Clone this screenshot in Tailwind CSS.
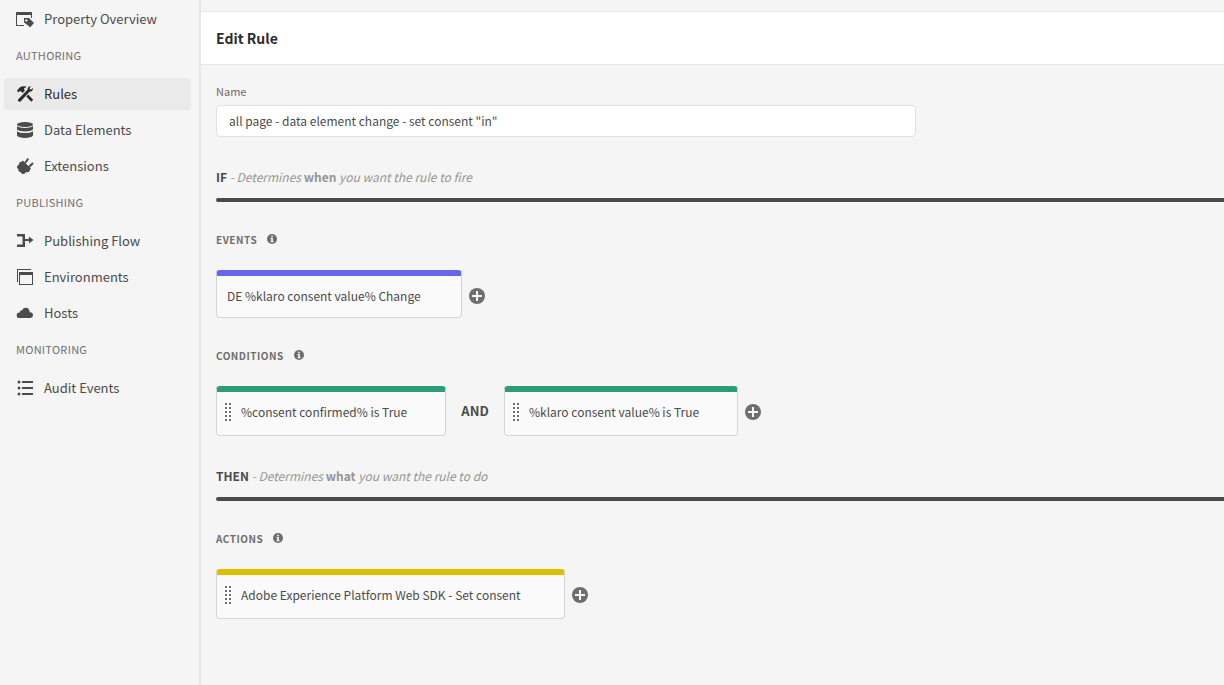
<!DOCTYPE html>
<html lang="en">
<head>
<meta charset="utf-8">
<meta name="viewport" content="width=device-width, initial-scale=1">
<title>Edit Rule</title>
<script src="https://cdn.jsdelivr.net/npm/@tailwindcss/browser@4"></script>
</head>
<body class="flex min-h-screen overflow-x-hidden bg-[#f5f5f5] font-['Noto_Sans_CJK_SC',sans-serif] text-[13px] leading-5 text-[#4b4b4b]">
<svg class="hidden" aria-hidden="true">
  <symbol id="info" viewBox="0 0 10 10"><circle cx="5" cy="5" r="5" fill="#6e6e6e"/><path d="M4.2 1.7h1.7v1.5H4.2zM3.5 4.1h2.4v3.1h.7v1H3.5v-1h.7V5.1h-.7z" fill="#f5f5f5"/></symbol>
  <symbol id="plus" viewBox="0 0 16 16"><circle cx="8" cy="8" r="8" fill="#6e6e6e"/><path d="M7 3h2v4h4v2H9v4H7V9H3V7h4z" fill="#f5f5f5"/></symbol>
  <symbol id="grip" viewBox="0 0 6 18"><path d="M0 0h2v2H0zM4 0h2v2H4zM0 4h2v2H0zM4 4h2v2H4zM0 8h2v2H0zM4 8h2v2H4zM0 12h2v2H0zM4 12h2v2H4zM0 16h2v2H0zM4 16h2v2H4z" fill="#6e6e6e"/></symbol>
</svg>

<nav class="w-[201px] shrink-0 border-r-2 border-[#e8e8e8] pt-[3px] pr-2 pl-1">
  <a href="#" class="flex h-8 items-center gap-2.5 rounded px-3">
    <svg class="h-[18px] w-[18px]" viewBox="0 0 18 18" fill="currentColor"><path d="M0 2h16v6h-1V5H1v10h7v1H0z"/><path d="M8 8h5l5 5-4 4.500-1.200-1.500L8 12.500zM10.300 9.200a1.200 1.200 0 1 0 .01 0z" fill-rule="evenodd"/></svg>
    Property Overview</a>
  <h2 class="mt-2.5 mb-[13px] px-3 text-[11px] tracking-wide text-[#6e6e6e]">AUTHORING</h2>
  <ul class="flex flex-col gap-1">
    <li><a href="#" aria-current="page" class="flex h-8 items-center gap-2.5 rounded bg-[#eaeaea] px-3 text-[#2c2c2c]">
      <svg class="h-[18px] w-[18px]" viewBox="0 0 18 18" fill="currentColor"><path d="M1 5.600L4 2.200C5.800 1 8 1 10.500 1.500L9.800 2.400C8.400 2.700 7.800 3.500 8.200 4.700L9 5.600 6.700 7.900 5 6.200 3.400 6.300 2.300 7.600z"/><path d="M12.200 9.600L17.200 14.800 15.200 16.800 10.300 11.600z"/><path d="M2.300 14.300L11.500 4.800C11.300 2.800 12.800 1 15 1.200L13.600 3 14 4.300 15.200 4.500 16.900 3C17.300 5.200 15.500 7 13.500 6.800L4.800 16.300C3.400 17.700 1 15.800 2.300 14.300z"/></svg>
      Rules</a></li>
    <li><a href="#" class="flex h-8 items-center gap-2.5 rounded px-3">
      <svg class="h-[18px] w-[18px]" viewBox="0 0 18 18" fill="currentColor"><ellipse cx="9" cy="3.500" rx="8" ry="2.500"/><path d="M1 5c2 2.600 14 2.600 16 0v3.200c-1.500 3-14.500 3-16 0zM1 10c2 2.600 14 2.600 16 0v4.500c-1.500 3.300-14.500 3.300-16 0z"/><path d="M1 9.600c2 2.400 14 2.400 16 0" fill="none" stroke="#f5f5f5"/></svg>
      Data Elements</a></li>
    <li><a href="#" class="flex h-8 items-center gap-2.5 rounded px-3">
      <svg class="h-[18px] w-[18px]" viewBox="0 0 18 18" fill="currentColor"><path d="M6.800 3.500L15 11.500 14 12.500Q14 14.500 12.500 15L10 15.300 8.300 16.700Q7 17.500 5.800 16.500L4.500 15.200 2.700 14.300 2.300 12.300 1.300 11Q.6 10 1.300 9L3.200 7 3.500 5.200 5.500 4.700z"/><path d="M9 6l3.300-4.300M13 10l4-4" fill="none" stroke="currentColor" stroke-width="2"/></svg>
      Extensions</a></li>
  </ul>
  <h2 class="mt-2.5 mb-[13px] px-3 text-[11px] tracking-wide text-[#6e6e6e]">PUBLISHING</h2>
  <ul class="flex flex-col gap-1">
    <li><a href="#" class="flex h-8 items-center gap-2.5 rounded px-3">
      <svg class="h-[18px] w-[18px]" viewBox="0 0 18 18" fill="currentColor"><path d="M1 2h8v5h4V4.500L17.500 8 13 11.500V9H9v6H1v-2.500h5.500V4.500H1z"/></svg>
      Publishing Flow</a></li>
    <li><a href="#" class="flex h-8 items-center gap-2.5 rounded px-3">
      <svg class="h-[18px] w-[18px]" viewBox="0 0 18 18" fill="currentColor"><path d="M1 1h14v1H2v12H1z"/><path d="M3 4h14v13H3zM4 7v9h12V7z" fill-rule="evenodd"/></svg>
      Environments</a></li>
    <li><a href="#" class="flex h-8 items-center gap-2.5 rounded px-3">
      <svg class="h-[18px] w-[18px]" viewBox="0 0 18 18" fill="currentColor"><path d="M3.500 14A2.700 2.700 0 0 1 3.300 8.600h.5C3.600 6.900 4.800 6 6.300 6.200 7 4.500 8.300 3.800 9.800 3.800c2.400 0 4 1.900 3.800 4.400C15.600 7.800 17 9.300 17 11c0 1.800-1.200 3-3 3z"/></svg>
      Hosts</a></li>
  </ul>
  <h2 class="mt-2.5 mb-[13px] px-3 text-[11px] tracking-wide text-[#6e6e6e]">MONITORING</h2>
  <a href="#" class="flex h-8 items-center gap-2.5 rounded px-3">
    <svg class="h-[18px] w-[18px]" viewBox="0 0 18 18" fill="currentColor"><circle cx="3" cy="3" r="1.500"/><circle cx="3" cy="9" r="1.500"/><circle cx="3" cy="15" r="1.500"/><path d="M6 2h11v2H6zM6 8h11v2H6zM6 14h11v2H6z"/></svg>
    Audit Events</a>
</nav>

<main class="min-w-0 flex-1 pt-[11px]">
  <header class="border-y border-[#e6e6e6] bg-white px-[15px] py-4">
    <h1 class="text-[14px] font-bold text-[#2c2c2c]">Edit Rule</h1>
  </header>
  <div class="pt-4 pl-[15px] text-[12px] leading-5">
    <label for="rule-name" class="block text-[11px] leading-5 text-[#6e6e6e]">Name</label>
    <input id="rule-name" type="text" value="all page - data element change - set consent &quot;in&quot;" class="mt-1 block h-8 w-full max-w-[700px] rounded border border-[#e1e1e1] bg-white px-3 pb-0.5">

    <section>
      <h2 class="mt-[30px] mb-[11px]"><b>IF</b> <span class="text-[#959595]"><i>- Determines</i> <b>when</b> <i>you want the rule to fire</i></span></h2>
      <div class="h-1 rounded-l-sm bg-[#4b4b4b]"></div>

      <h3 class="mt-7 flex items-center gap-2.5 text-[10px] leading-5 font-bold tracking-wider text-[#6e6e6e]">EVENTS
        <button type="button" aria-label="About events" class="pb-0.5"><svg class="h-2.5 w-2.5"><use href="#info"/></svg></button></h3>
      <div class="mt-5 flex items-center gap-[7px]">
        <button type="button" class="flex h-12 w-[246px] items-center rounded border border-t-[6px] border-[#d5d5d5] border-t-[#6767ec] bg-[#fafafa] px-2.5 pb-0.5 text-left">DE %klaro consent value% Change</button>
        <button type="button" aria-label="Add event" class="pt-1"><svg class="h-4 w-4"><use href="#plus"/></svg></button>
      </div>

      <h3 class="mt-7 flex items-center gap-2.5 text-[10px] leading-5 font-bold tracking-wider text-[#6e6e6e]">CONDITIONS
        <button type="button" aria-label="About conditions" class="pb-0.5"><svg class="h-2.5 w-2.5"><use href="#info"/></svg></button></h3>
      <div class="mt-5 flex items-center">
        <button type="button" class="flex h-[50px] w-[230px] items-center gap-2.5 rounded border border-t-[6px] border-[#d5d5d5] border-t-[#2d9d78] bg-[#fafafa] px-2 pb-1 text-left"><svg class="h-[18px] w-1.5"><use href="#grip"/></svg>%consent confirmed% is True</button>
        <b class="w-[58px] text-center text-[13px] leading-5">AND</b>
        <button type="button" class="flex h-[50px] w-[234px] items-center gap-2.5 rounded border border-t-[6px] border-[#d5d5d5] border-t-[#2d9d78] bg-[#fafafa] px-2 pb-1 text-left"><svg class="h-[18px] w-1.5"><use href="#grip"/></svg>%klaro consent value% is True</button>
        <button type="button" aria-label="Add condition" class="ml-[7px] pt-0.5"><svg class="h-4 w-4"><use href="#plus"/></svg></button>
      </div>
    </section>

    <section>
      <h2 class="mt-[30px] mb-[11px]"><b>THEN</b> <span class="text-[#959595]"><i>- Determines</i> <b>what</b> <i>you want the rule to do</i></span></h2>
      <div class="h-1 rounded-l-sm bg-[#4b4b4b]"></div>

      <h3 class="mt-7 flex items-center gap-2.5 text-[10px] leading-5 font-bold tracking-wider text-[#6e6e6e]">ACTIONS
        <button type="button" aria-label="About actions" class="pb-0.5"><svg class="h-2.5 w-2.5"><use href="#info"/></svg></button></h3>
      <div class="mt-5 flex items-center gap-[7px]">
        <button type="button" class="flex h-[50px] w-[349px] items-center gap-2.5 rounded border border-t-[6px] border-[#d5d5d5] border-t-[#dfbf00] bg-[#fafafa] px-2 pb-1 text-left"><svg class="h-[18px] w-1.5"><use href="#grip"/></svg>Adobe Experience Platform Web SDK - Set consent</button>
        <button type="button" aria-label="Add action" class="pt-0.5"><svg class="h-4 w-4"><use href="#plus"/></svg></button>
      </div>
    </section>
  </div>
</main>
</body>
</html>
